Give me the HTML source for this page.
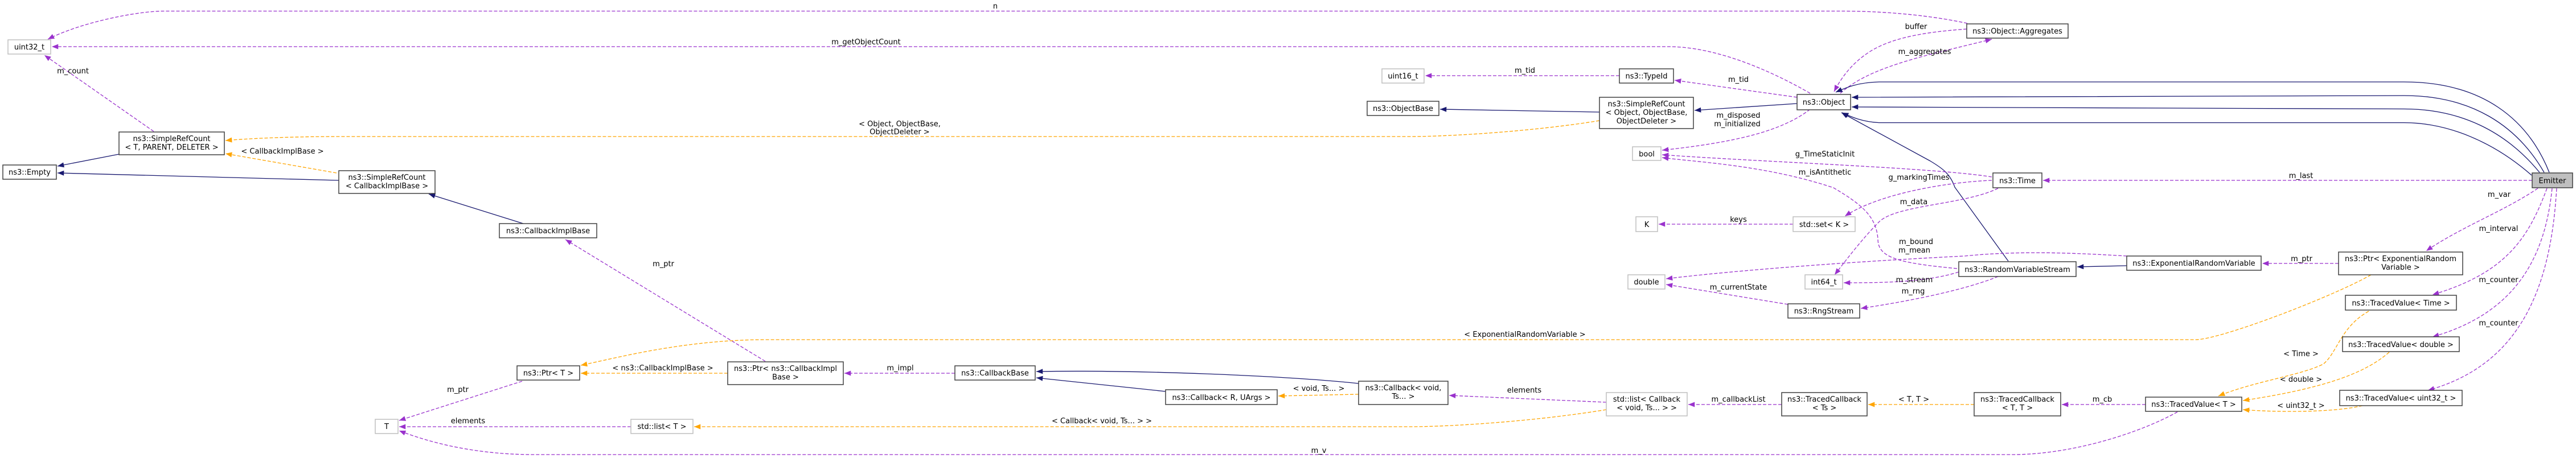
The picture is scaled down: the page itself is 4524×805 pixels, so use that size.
<!DOCTYPE html>
<html><head><meta charset="utf-8"><style>
html,body{margin:0;padding:0;background:#fff;}
svg{display:block;}
text{font-family:"DejaVu Sans","Liberation Sans",sans-serif;font-size:13px;fill:#000;}
.n{fill:#fff;stroke:#404040;stroke-width:1.5;}
.g{fill:#fff;stroke:#bfbfbf;stroke-width:1.5;}
.p{fill:none;stroke:#9a32cd;stroke-width:1.3;stroke-dasharray:6,3;marker-end:url(#mp);}
.o{fill:none;stroke:#ffa500;stroke-width:1.3;stroke-dasharray:6,3;marker-end:url(#mo);}
.b{fill:none;stroke:#191970;stroke-width:1.3;marker-end:url(#mb);}
</style></head><body>
<svg width="4524" height="805" viewBox="0 0 4524 805" xmlns="http://www.w3.org/2000/svg">
<defs>
<marker id="mp" viewBox="0 0 10 8" refX="10" refY="4" markerWidth="12" markerHeight="9" markerUnits="userSpaceOnUse" orient="auto"><path d="M0,0 L10,4 L0,8 z" fill="#9a32cd"/></marker>
<marker id="mo" viewBox="0 0 10 8" refX="10" refY="4" markerWidth="12" markerHeight="9" markerUnits="userSpaceOnUse" orient="auto"><path d="M0,0 L10,4 L0,8 z" fill="#ffa500"/></marker>
<marker id="mb" viewBox="0 0 10 8" refX="10" refY="4" markerWidth="12" markerHeight="9" markerUnits="userSpaceOnUse" orient="auto"><path d="M0,0 L10,4 L0,8 z" fill="#191970"/></marker>
</defs>

<!-- edges -->
<path class="p" d="M3455,41 C3380,25 3300,19.5 3233,19.5 L288,19.5 C240,19.5 140,40 84,69"/>
<path class="p" d="M3454,51 C3400,55 3330,62 3285,90 C3250,112 3232,140 3221,161"/>
<path class="p" d="M3232,164 C3270,130 3330,110 3420,88 L3498,69"/>
<path class="p" d="M3179,164 C3120,130 3020,82 2930,82 L91,82"/>
<path class="p" d="M3156,171 L2941,141"/>
<path class="p" d="M2844,133 L2503,133"/>
<path class="b" d="M3156,182 L2976,194"/>
<path class="b" d="M2809,197 L2529,192"/>
<path class="o" d="M2809,212 C2700,230 2550,240 2476,240 L600,240 C500,240 430,244 396,247"/>
<path class="o" d="M591,304 L396,270"/>
<path class="b" d="M595,317 L101,304"/>
<path class="b" d="M209,271 L101,292"/>
<path class="p" d="M270,231 L78,97"/>
<path class="b" d="M919,393 L753,341"/>
<path class="p" d="M1344,635 L993,421"/>
<path class="o" d="M4164,483 C4100,520 3900,597 3856,597 L1346,597 C1200,597 1080,630 1020,642"/>
<path class="o" d="M1278,656 L1020,656"/>
<path class="p" d="M917,670 L701,739"/>
<path class="p" d="M1108,750 L701,750"/>
<path class="p" d="M3824,724 C3760,760 3640,799 3535,799 L937,799 C840,799 760,780 701,757"/>
<path class="p" d="M1677,656 L1483,656"/>
<path class="b" d="M2386,674 C2250,660 2000,650 1820,653"/>
<path class="b" d="M2047,688 L1820,664"/>
<path class="o" d="M2386,693 L2245,696"/>
<path class="p" d="M2821,707 L2545,695"/>
<path class="o" d="M2821,720 C2700,740 2550,750 2476,750 L1219,750"/>
<path class="p" d="M3129,711 L2965,711"/>
<path class="o" d="M3467,711 L3281,711"/>
<path class="p" d="M3768,711 L3621,711"/>
<path class="o" d="M4160,547 C4110,575 4105,620 4080,640 C4040,660 3960,670 3896,696"/>
<path class="o" d="M4196,619 C4160,650 4100,680 3939,704"/>
<path class="o" d="M4149,713 C4100,725 4000,725 3939,720"/>
<path class="b" d="M4477,303 C4440,210 4360,144 4222,144 L3300,144 C3260,145 3240,155 3224,162"/>
<path class="b" d="M4468,303 C4420,220 4340,168 4222,168 L3252,171"/>
<path class="b" d="M4460,303 C4400,230 4320,191.5 4222,191.5 L3252,188"/>
<path class="b" d="M4446,308 C4380,250 4300,215.6 4222,215.6 L3300,215.6 C3270,214 3250,205 3235,198"/>
<path class="b" d="M3527,459 L3433,329 C3425,305 3410,295 3390,283 L3234,198"/>
<path class="p" d="M4447,317 L3588,317"/>
<path class="p" d="M3179,192 C3130,230 3050,250 2919,264"/>
<path class="p" d="M3498,311 C3400,295 3100,285 2919,272"/>
<path class="p" d="M3437,472 C3330,462 3298,452 3298,420 C3295,380 3269,359 3220,330 C3100,290 2980,285 2919,277"/>
<path class="p" d="M3498,317 C3420,320 3300,340 3240,380"/>
<path class="p" d="M3149,394 L2913,394"/>
<path class="p" d="M3509,331 C3450,360 3330,360 3300,390 C3270,420 3240,460 3222,483"/>
<path class="p" d="M3735,450 C3650,445 3550,440 3450,450 C3250,460 3050,475 2926,490"/>
<path class="p" d="M3440,478 C3380,497 3300,497 3238,497"/>
<path class="p" d="M3509,486 C3450,510 3350,530 3268,542"/>
<path class="p" d="M3140,535 L2926,500"/>
<path class="b" d="M3735,467 L3648,469"/>
<path class="p" d="M4107,463 L3973,463"/>
<path class="p" d="M4457,331 C4400,370 4320,400 4261,441"/>
<path class="p" d="M4473,331 C4440,420 4400,480 4272,518"/>
<path class="p" d="M4482,331 C4470,450 4420,550 4272,592"/>
<path class="p" d="M4490,331 C4480,500 4430,640 4264,686"/>

<!-- edge labels -->
<g text-anchor="middle">
<text x="1748" y="15">n</text>
<text x="1521" y="78">m_getObjectCount</text>
<text x="1580" y="222">&lt; Object, ObjectBase,</text>
<text x="1580" y="236">ObjectDeleter &gt;</text>
<text x="128" y="129">m_count</text>
<text x="496" y="270">&lt; CallbackImplBase &gt;</text>
<text x="1165" y="468">m_ptr</text>
<text x="1164" y="651">&lt; ns3::CallbackImplBase &gt;</text>
<text x="804" y="689">m_ptr</text>
<text x="822" y="744">elements</text>
<text x="1581" y="651">m_impl</text>
<text x="1935" y="744">&lt; Callback&lt; void, Ts... &gt; &gt;</text>
<text x="2316" y="687">&lt; void, Ts... &gt;</text>
<text x="2316" y="796">m_v</text>
<text x="2678" y="128">m_tid</text>
<text x="3053" y="144">m_tid</text>
<text x="3365" y="51">buffer</text>
<text x="3380" y="95">m_aggregates</text>
<text x="3053" y="207">m_disposed</text>
<text x="3051" y="222">m_initialized</text>
<text x="3205" y="275">g_TimeStaticInit</text>
<text x="3205" y="307">m_isAntithetic</text>
<text x="3370" y="316">g_markingTimes</text>
<text x="3053" y="390">keys</text>
<text x="3361" y="359">m_data</text>
<text x="3365" y="429">m_bound</text>
<text x="3362" y="444">m_mean</text>
<text x="3362" y="496">m_stream</text>
<text x="3360" y="516">m_rng</text>
<text x="3053" y="509">m_currentState</text>
<text x="2678" y="592">&lt; ExponentialRandomVariable &gt;</text>
<text x="2677" y="690">elements</text>
<text x="3053" y="706">m_callbackList</text>
<text x="3361" y="706">&lt; T, T &gt;</text>
<text x="3692" y="706">m_cb</text>
<text x="4041" y="313">m_last</text>
<text x="4042" y="459">m_ptr</text>
<text x="4389" y="346">m_var</text>
<text x="4388" y="406">m_interval</text>
<text x="4388" y="496">m_counter</text>
<text x="4388" y="572">m_counter</text>
<text x="4041" y="626">&lt; Time &gt;</text>
<text x="4041" y="671">&lt; double &gt;</text>
<text x="4041" y="717">&lt; uint32_t &gt;</text>
</g>

<!-- nodes -->
<g text-anchor="middle">
<rect class="g" x="14" y="70" width="75" height="25"/><text x="51.5" y="87">uint32_t</text>
<rect class="n" x="209" y="232" width="185" height="40"/><text x="301.5" y="248">ns3::SimpleRefCount</text><text x="301.5" y="263">&lt; T, PARENT, DELETER &gt;</text>
<rect class="n" x="5" y="290" width="94" height="25"/><text x="52" y="307">ns3::Empty</text>
<rect class="n" x="595" y="300" width="169" height="40"/><text x="679.5" y="316">ns3::SimpleRefCount</text><text x="679.5" y="331">&lt; CallbackImplBase &gt;</text>
<rect class="n" x="877" y="393" width="171" height="25"/><text x="962.5" y="410">ns3::CallbackImplBase</text>
<rect class="n" x="908" y="643" width="110" height="25"/><text x="963" y="660">ns3::Ptr&lt; T &gt;</text>
<rect class="g" x="659" y="737" width="40" height="25"/><text x="679" y="754">T</text>
<rect class="g" x="1108" y="737" width="109" height="25"/><text x="1162.5" y="754">std::list&lt; T &gt;</text>
<rect class="n" x="1278" y="636" width="203" height="40"/><text x="1379.5" y="652">ns3::Ptr&lt; ns3::CallbackImpl</text><text x="1379.5" y="667">Base &gt;</text>
<rect class="n" x="1677" y="643" width="141" height="25"/><text x="1747.5" y="660">ns3::CallbackBase</text>
<rect class="n" x="2047" y="685" width="196" height="26"/><text x="2145" y="703">ns3::Callback&lt; R, UArgs &gt;</text>
<rect class="n" x="2386" y="670" width="157" height="41"/><text x="2464.5" y="686">ns3::Callback&lt; void,</text><text x="2464.5" y="701">Ts... &gt;</text>
<rect class="g" x="2821" y="690" width="142" height="41"/><text x="2892" y="706">std::list&lt; Callback</text><text x="2892" y="721">&lt; void, Ts... &gt; &gt;</text>
<rect class="n" x="3129" y="690" width="150" height="41"/><text x="3204" y="706">ns3::TracedCallback</text><text x="3204" y="721">&lt; Ts &gt;</text>
<rect class="n" x="3467" y="690" width="152" height="41"/><text x="3543" y="706">ns3::TracedCallback</text><text x="3543" y="721">&lt; T, T &gt;</text>
<rect class="n" x="3768" y="698" width="169" height="25"/><text x="3852.5" y="715">ns3::TracedValue&lt; T &gt;</text>
<rect class="g" x="2427" y="121" width="74" height="25"/><text x="2464" y="138">uint16_t</text>
<rect class="n" x="2844" y="121" width="95" height="25"/><text x="2891.5" y="138">ns3::TypeId</text>
<rect class="n" x="2401" y="178" width="126" height="25"/><text x="2464" y="195">ns3::ObjectBase</text>
<rect class="n" x="2809" y="171" width="165" height="55"/><text x="2891.5" y="187">ns3::SimpleRefCount</text><text x="2891.5" y="202">&lt; Object, ObjectBase,</text><text x="2891.5" y="217">ObjectDeleter &gt;</text>
<rect class="n" x="3156" y="166" width="94" height="27"/><text x="3203" y="184">ns3::Object</text>
<rect class="n" x="3454" y="42" width="178" height="25"/><text x="3543" y="59">ns3::Object::Aggregates</text>
<rect class="g" x="2867" y="258" width="50" height="24"/><text x="2892" y="275">bool</text>
<rect class="g" x="2873" y="381" width="38" height="26"/><text x="2892" y="399">K</text>
<rect class="g" x="3149" y="381" width="109" height="26"/><text x="3203.5" y="399">std::set&lt; K &gt;</text>
<rect class="g" x="2859" y="483" width="65" height="25"/><text x="2891.5" y="500">double</text>
<rect class="g" x="3170" y="483" width="66" height="25"/><text x="3203" y="500">int64_t</text>
<rect class="n" x="3140" y="534" width="126" height="25"/><text x="3203" y="551">ns3::RngStream</text>
<rect class="n" x="3500" y="304" width="86" height="26"/><text x="3543" y="322">ns3::Time</text>
<rect class="n" x="3440" y="460" width="206" height="26"/><text x="3543" y="478">ns3::RandomVariableStream</text>
<rect class="n" x="3735" y="450" width="236" height="25"/><text x="3853" y="467">ns3::ExponentialRandomVariable</text>
<rect class="n" x="4107" y="443" width="218" height="40"/><text x="4216" y="459">ns3::Ptr&lt; ExponentialRandom</text><text x="4216" y="474">Variable &gt;</text>
<rect class="n" x="4119" y="519" width="195" height="26"/><text x="4216.5" y="537">ns3::TracedValue&lt; Time &gt;</text>
<rect class="n" x="4114" y="592" width="205" height="26"/><text x="4216.5" y="610">ns3::TracedValue&lt; double &gt;</text>
<rect class="n" x="4109" y="686" width="215" height="27"/><text x="4216.5" y="704">ns3::TracedValue&lt; uint32_t &gt;</text>
<rect x="4447" y="304" width="71" height="26" fill="#bfbfbf" stroke="#404040" stroke-width="1.5"/><text x="4482.5" y="322">Emitter</text>
</g>
</svg>
</body></html>
